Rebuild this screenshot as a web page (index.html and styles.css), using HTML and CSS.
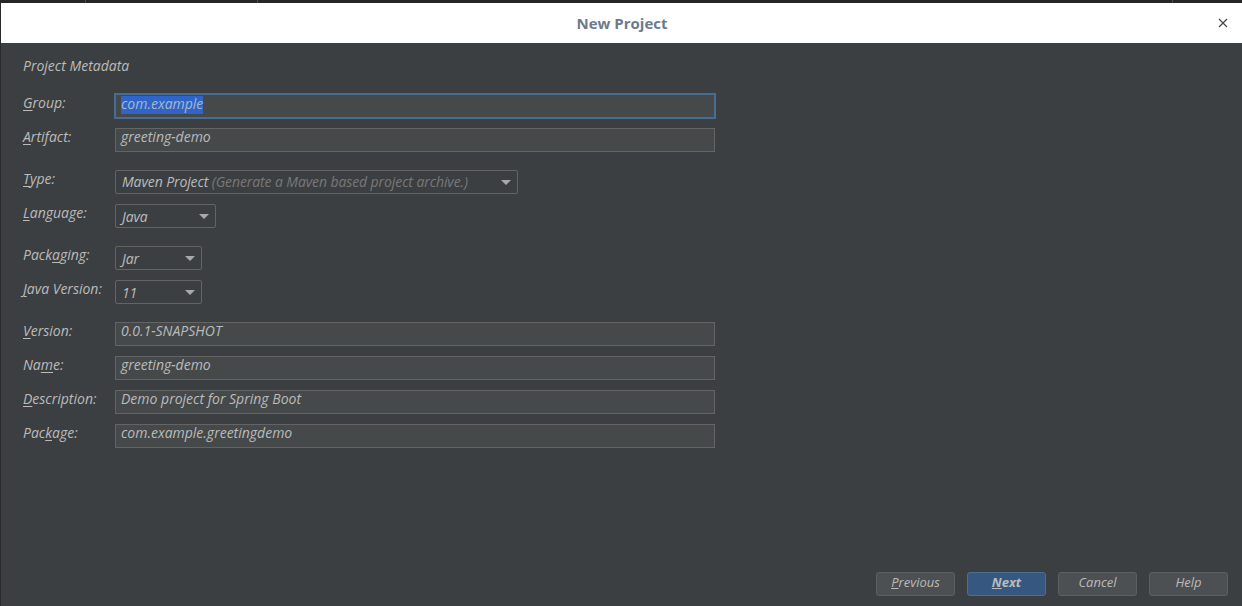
FILE: index.html
```html
<!DOCTYPE html>
<html>
<head>
<meta charset="utf-8">
<link rel="stylesheet" href="styles.css">
</head>
<body>
<div class="topstrip"><span class="tick t1"></span><span class="tick t2"></span><span class="tick t3"></span></div>
<div class="dialog">
  <div class="titlebar">
    <div class="title">New Project</div>
    <svg class="close" width="10" height="10" viewBox="0 0 10 10"><path d="M1 1 L9 9 M9 1 L1 9" stroke="#444" stroke-width="1.2"/></svg>
  </div>
  <div class="body">
    <div class="section">Project Metadata</div>
    <div class="row r-group"><label class="lbl"><u>G</u>roup:</label><div class="input focused"><span class="sel">com.example</span></div></div>
    <div class="row r-artifact"><label class="lbl"><u>A</u>rtifact:</label><div class="input">greeting-demo</div></div>
    <div class="row r-type"><label class="lbl"><u>T</u>ype:</label><div class="combo w-type">Maven Project <span class="hint">(Generate a Maven based project archive.)</span><i class="arrow"></i></div></div>
    <div class="row r-lang"><label class="lbl"><u>L</u>anguage:</label><div class="combo w-lang combo-low">Java<i class="arrow"></i></div></div>
    <div class="row r-pack"><label class="lbl">Pack<u>a</u>ging:</label><div class="combo w-small combo-low">Jar<i class="arrow"></i></div></div>
    <div class="row r-jv"><label class="lbl"><u>J</u>ava Version:</label><div class="combo w-small combo-low">11<i class="arrow"></i></div></div>
    <div class="row r-ver"><label class="lbl"><u>V</u>ersion:</label><div class="input">0.0.1-SNAPSHOT</div></div>
    <div class="row r-name"><label class="lbl">Na<u>m</u>e:</label><div class="input">greeting-demo</div></div>
    <div class="row r-desc"><label class="lbl"><u>D</u>escription:</label><div class="input">Demo project for Spring Boot</div></div>
    <div class="row r-pkg"><label class="lbl">Pac<u>k</u>age:</label><div class="input">com.example.greetingdemo</div></div>
    <div class="spacer"></div>
    <div class="buttons">
      <div class="btn"><u>P</u>revious</div>
      <div class="btn primary"><u>N</u>ext</div>
      <div class="btn">Cancel</div>
      <div class="btn">Help</div>
    </div>
  </div>
</div>
</body>
</html>
```
FILE: styles.css
```css
html, body {
  margin: 0;
  padding: 0;
  width: 1242px;
  height: 606px;
  overflow: hidden;
  background: #2b2b2b;
  font-family: "Open Sans", "Noto Sans", sans-serif;
}
.topstrip {
  height: 3px;
  background: #262626;
  position: relative;
}
.tick { position: absolute; top: 0; width: 1px; height: 3px; background: #4a4a4a; }
.t1 { left: 85px; }
.t2 { left: 257px; }
.t3 { left: 1172px; }
.dialog {
  margin-left: 1px;
  height: 603px;
  display: flex;
  flex-direction: column;
}
.titlebar {
  height: 40px;
  background: #ffffff;
  display: flex;
  align-items: center;
  justify-content: center;
  position: relative;
}
.title {
  font-family: "Open Sans", "Noto Sans", sans-serif;
  font-weight: 700;
  font-size: 15px;
  color: #6d7a8b;
  margin-left: 1px;
}
.close {
  position: absolute;
  right: 14px;
  top: 15px;
}
.body {
  flex: 1;
  background: #3c3f41;
  padding: 0 0 10px 22px;
  display: flex;
  flex-direction: column;
  color: #bbbbbb;
  font-style: italic;
  font-size: 14px;
}
.section {
  margin-top: 14px;
  height: 18px;
  line-height: 18px;
  font-size: 14px;
  color: #bbbbbb;
}
.row {
  display: flex;
  align-items: flex-start;
  height: 24px;
}
.lbl {
  width: 92px;
  line-height: 18px;
  color: #bbbbbb;
}
.lbl u { text-decoration-thickness: 1px; text-underline-offset: 2px; }
.r-group { margin-top: 19px; }
.r-artifact { margin-top: 10px; }
.r-type { margin-top: 18px; }
.r-lang { margin-top: 10px; }
.r-pack { margin-top: 18px; }
.r-jv { margin-top: 10px; }
.r-ver { margin-top: 18px; }
.r-name, .r-desc, .r-pkg { margin-top: 10px; }
.input {
  box-sizing: border-box;
  width: 600px;
  height: 24px;
  background: #45494a;
  border: 1px solid #646464;
  padding: 0 5px;
  line-height: 16px;
  color: #bbbbbb;
  white-space: nowrap;
}
.input.focused {
  border: 2px solid #466d94;
  width: 602px;
  margin-left: -1px;
  margin-top: -1px;
  height: 26px;
  padding: 1px 5px;
}
.sel {
  background: #2f65ca;
  color: #a9b7c6;
  display: inline-block;
  height: 18px;
  line-height: 16px;
}
.combo {
  box-sizing: border-box;
  height: 24px;
  background: #3c3f41;
  border: 1px solid #646464;
  border-radius: 2px;
  padding: 0 6px;
  line-height: 22px;
  color: #bbbbbb;
  position: relative;
  white-space: nowrap;
  letter-spacing: -0.1px;
}
.combo-low { line-height: 24px; }
.w-type { width: 403px; }
.w-lang { width: 101px; }
.w-small { width: 87px; }
.hint { color: #787878; }
.arrow {
  position: absolute;
  right: 6px;
  top: 9px;
  width: 0;
  height: 0;
  border-left: 5px solid transparent;
  border-right: 5px solid transparent;
  border-top: 5px solid #a9a9a9;
}
.spacer { flex: 1; }
.buttons {
  display: flex;
  justify-content: flex-end;
  gap: 12px;
  padding-right: 14px;
}
.btn {
  box-sizing: border-box;
  width: 79px;
  height: 24px;
  border: 1px solid #5e6060;
  border-radius: 3px;
  background: #4c5052;
  color: #bbbbbb;
  text-align: center;
  line-height: 18px;
  font-size: 13px;
}
.btn.primary {
  background: #365880;
  border-color: #4c708c;
  font-weight: 700;
}
```
